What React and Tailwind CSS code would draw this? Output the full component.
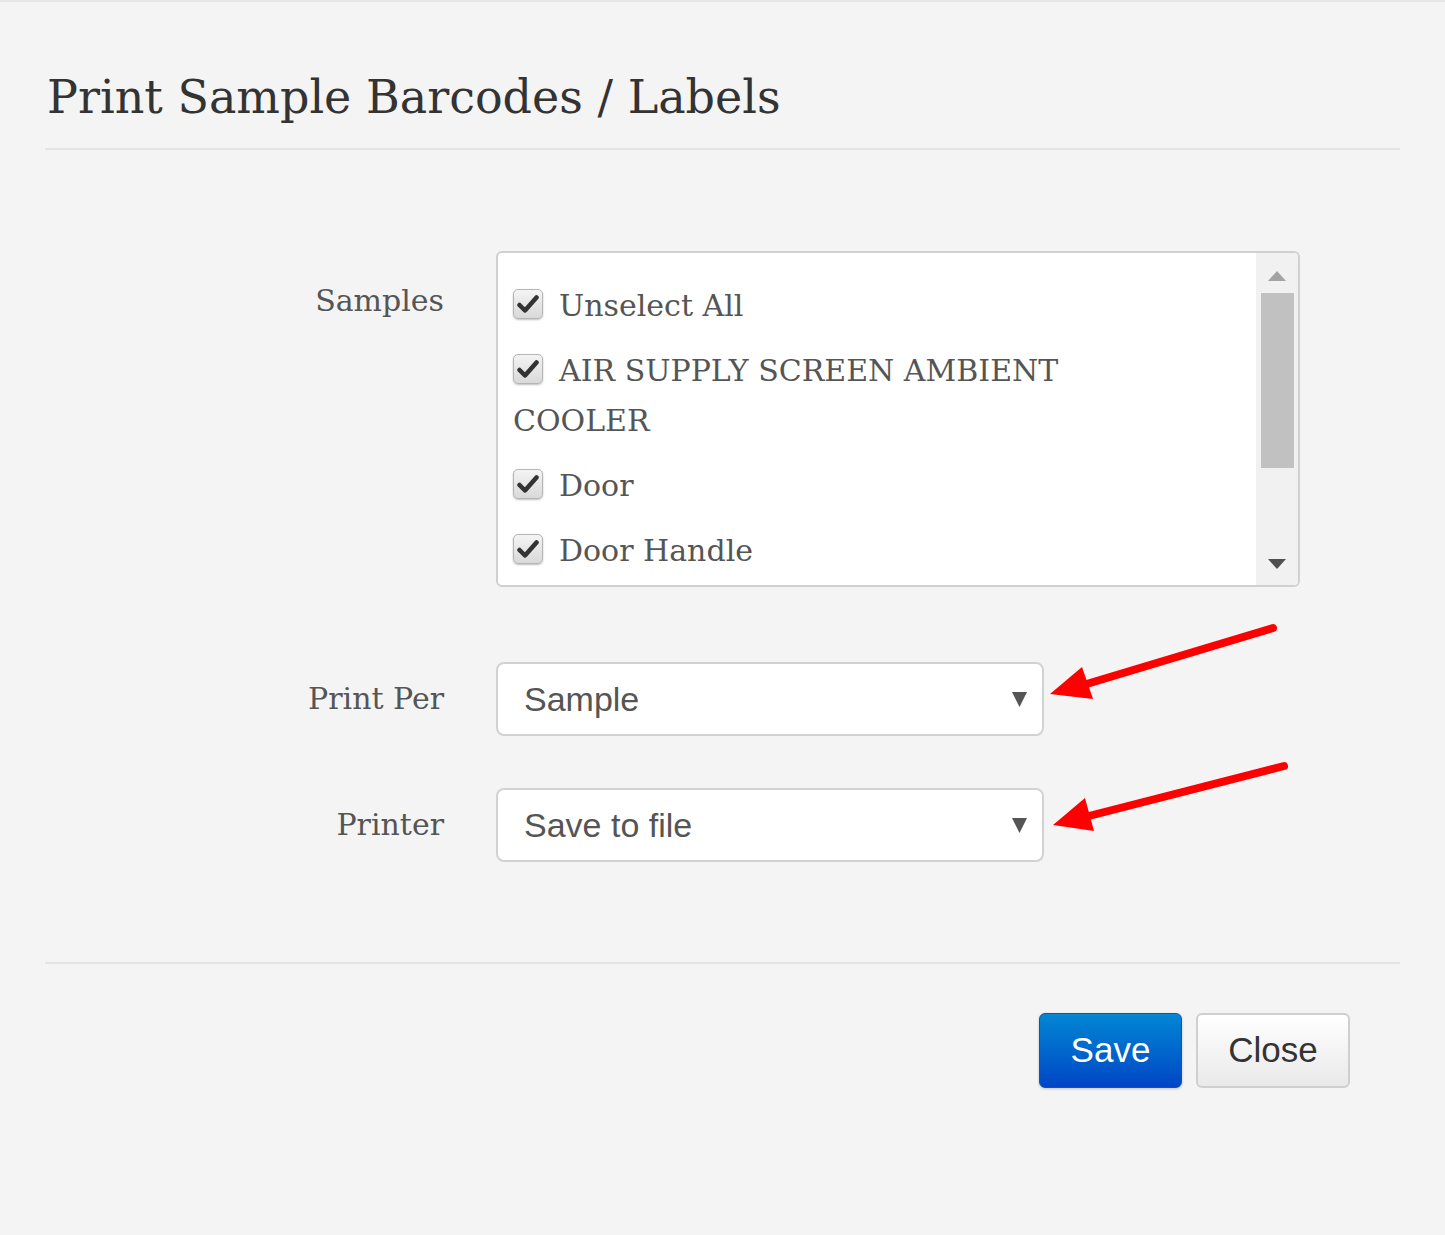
const serif = "font-['DejaVu_Serif',serif]";
const sans = "font-['Liberation_Sans',Arial,sans-serif]";

const items = [
  { label: "Unselect All", checked: true },
  { label: "AIR SUPPLY SCREEN AMBIENT COOLER", checked: true },
  { label: "Door", checked: true },
  { label: "Door Handle", checked: true },
];

function Check() {
  return (
    <span className="mr-[16px] inline-flex h-[30px] w-[30px] shrink-0 -translate-y-[4px] items-center justify-center rounded-[5px] border border-[#b5b5b5] bg-gradient-to-b from-[#f4f4f4] to-[#d9d9d9] align-middle shadow-[0_1px_2px_rgba(0,0,0,0.25)]">
      <svg width="22" height="20" viewBox="0 0 22 20">
        <path d="M2.5 11 L8 16.5 L19.5 3.5" fill="none" stroke="#333" strokeWidth="4.5" strokeLinejoin="round" strokeLinecap="round" />
      </svg>
    </span>
  );
}

function Select({ value }) {
  return (
    <div className="flex h-[74px] w-[548px] items-center justify-between rounded-[8px] border-2 border-[#d2d2d2] bg-white pl-[26px] pr-[15px]">
      <span className={`${sans} text-[34px] text-[#555]`}>{value}</span>
      <svg width="15" height="15" viewBox="0 0 15 15">
        <path d="M0 0 L15 0 L7.5 15 Z" fill="#555" />
      </svg>
    </div>
  );
}

export default function App() {
  return (
    <div className="relative h-[1235px] w-[1445px] overflow-hidden border-t-2 border-[#e6e6e6] bg-[#f4f4f4]">
      <div className="px-[45px]">
        <h1 className={`${serif} pt-[64px] pb-[20px] pl-[2px] text-[46px] leading-[62px] text-[#333]`}>
          Print Sample Barcodes / Labels
        </h1>
        <div className="h-[2px] bg-[#e4e4e4]" />

        <div className="grid grid-cols-[399px_1fr] gap-x-[52px] pt-[101px]">
          <div className={`${serif} pt-[28px] text-right text-[30px] leading-[44px] text-[#555]`}>Samples</div>
          <div className="flex h-[336px] w-[804px] overflow-hidden rounded-[6px] border-2 border-[#d0d0d0] bg-white">
            <div className={`${serif} flex-1 overflow-hidden pl-[15px] pr-[60px] pt-[28px] text-[30px] leading-[50px] text-[#555]`}>
              {items.map((it) => (
                <div key={it.label} className="mb-[15px]">
                  <Check />
                  {it.label}
                </div>
              ))}
            </div>
            <div className="flex w-[42px] flex-col items-center bg-[#f1f1f1] pt-[18px] pb-[16px]">
              <svg width="18" height="10" viewBox="0 0 18 10">
                <path d="M9 0 L18 10 L0 10 Z" fill="#a3a3a3" />
              </svg>
              <div className="mt-[12px] h-[175px] w-[33px] bg-[#c1c1c1]" />
              <div className="flex-1" />
              <svg width="18" height="10" viewBox="0 0 18 10">
                <path d="M0 0 L18 0 L9 10 Z" fill="#505050" />
              </svg>
            </div>
          </div>

          <div className={`${serif} pt-[75px] text-right text-[30px] leading-[74px] text-[#555]`}>Print Per</div>
          <div className="pt-[75px]">
            <Select value="Sample" />
          </div>

          <div className={`${serif} pt-[52px] text-right text-[30px] leading-[74px] text-[#555]`}>Printer</div>
          <div className="pt-[52px]">
            <Select value="Save to file" />
          </div>
        </div>

        <div className="mt-[100px] h-[2px] bg-[#e4e4e4]" />

        <div className="flex justify-end gap-[14px] pt-[49px] pr-[50px]">
          <button className={`${sans} h-[75px] w-[143px] rounded-[6px] border border-[#0a55b8] bg-gradient-to-b from-[#0886d2] to-[#0044c6] text-[35px] text-white shadow-[0_1px_3px_rgba(0,0,0,0.2)]`}>
            Save
          </button>
          <button className={`${sans} h-[75px] w-[154px] rounded-[6px] border-2 border-[#cfcfcf] bg-gradient-to-b from-white to-[#e9e9e9] text-[35px] text-[#333]`}>
            Close
          </button>
        </div>
      </div>

      {/* annotation arrows */}
      <svg className="pointer-events-none absolute left-0 top-0" width="1445" height="1235">
        <line x1="1273" y1="626" x2="1080" y2="684" stroke="#ff0000" strokeWidth="8" strokeLinecap="round" />
        <polygon points="1050,692 1082,665 1093,697" fill="#ff0000" />
        <line x1="1284" y1="764" x2="1085" y2="815" stroke="#ff0000" strokeWidth="8" strokeLinecap="round" />
        <polygon points="1053,823 1085,796 1094,829" fill="#ff0000" />
      </svg>
    </div>
  );
}
